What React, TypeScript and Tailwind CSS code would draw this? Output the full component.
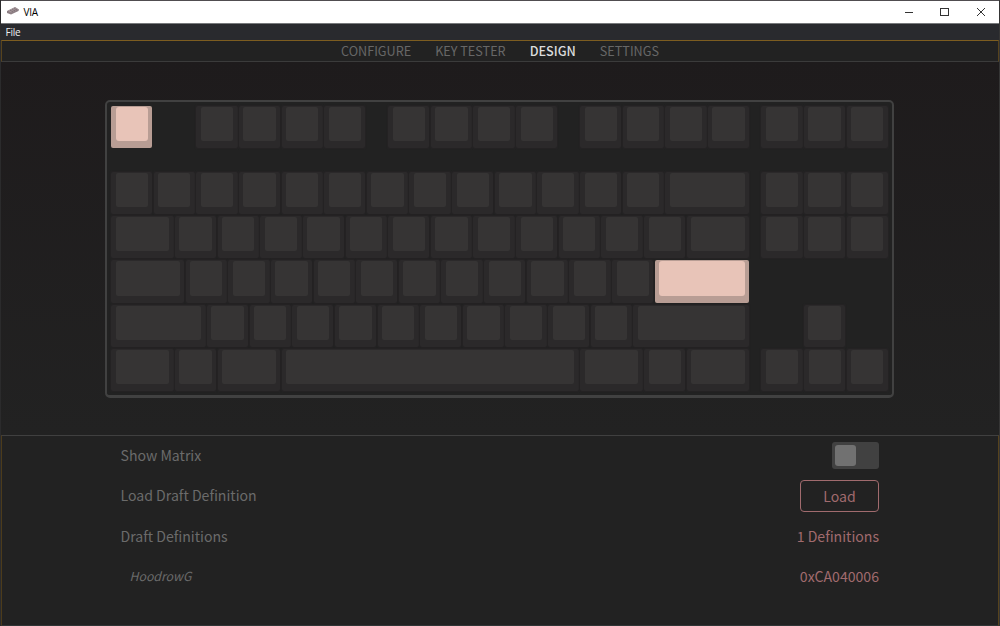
import React from "react";

type Cell = { w: number; gap?: boolean; accent?: boolean };

const UNIT = 42.65;

const k = (w = 1): Cell => ({ w });
const gap = (w: number): Cell => ({ w, gap: true });
const accent = (w = 1): Cell => ({ w, accent: true });
const run = (n: number): Cell[] => Array.from({ length: n }, () => k());

const rows: Cell[][] = [
  [accent(), gap(1), ...run(4), gap(0.5), ...run(4), gap(0.5), ...run(4), gap(0.25), ...run(3)],
  [...run(13), k(2), gap(0.25), ...run(3)],
  [k(1.5), ...run(12), k(1.5), gap(0.25), ...run(3)],
  [k(1.75), ...run(11), accent(2.25)],
  [k(2.25), ...run(10), k(2.75), gap(1.25), k()],
  [k(1.5), k(), k(1.5), k(7), k(1.5), k(), k(1.5), gap(0.25), ...run(3)],
];

function Key({ cell }: { cell: Cell }) {
  const width = { width: cell.w * UNIT };
  if (cell.gap) return <div className="shrink-0" style={width} />;
  return (
    <div className="h-full shrink-0 pr-[1.4px] pb-[2px]" style={width}>
      <div
        className={
          cell.accent
            ? "h-full rounded-[2px] bg-[#b89d94] px-[4.5px] pt-[1px] pb-[7px]"
            : "h-full rounded-[2px] bg-[#2b292a] px-[4.5px] pt-[1px] pb-[7px] shadow-[0_0_1px_1px_#252324]"
        }
      >
        <div className={cell.accent ? "h-full rounded-[3px] bg-[#e8c4b8]" : "h-full rounded-[2px] bg-[#363434]"} />
      </div>
    </div>
  );
}

function TitleBar() {
  return (
    <header className="flex h-[24px] shrink-0 items-center border-t border-b border-t-[#504d50] border-b-[#77797b] bg-white font-['Open_Sans',sans-serif]">
      <svg className="mb-[2px] ml-[6px]" width="12" height="8" viewBox="0 0 12 8">
        <path d="M0 4 L8 0 L12 2.5 L11.5 4 L4 7.5 L0 6 Z" fill="#8d7f84" />
        <path d="M1 3.7 L8 .5 L11 2.3 L4 5.6 Z" fill="#aa9b9e" />
        <path d="M3 3.4l3 1.2M5 2.5l3 1.2M7 1.6l3 1.2" stroke="#75686e" strokeWidth=".8" />
      </svg>
      <span className="ml-[4.5px] text-[10px] leading-none tracking-[-0.2px] text-black">VIA</span>
      <svg className="mr-[13px] ml-auto" width="82" height="10" viewBox="0 0 82 10" fill="none" stroke="#333">
        <path d="M1 5.5h8" />
        <rect x="36.5" y="1.5" width="8" height="7" />
        <path d="M73 1l8 8M81 1l-8 8" />
      </svg>
    </header>
  );
}

const tabs = ["CONFIGURE", "KEY TESTER", "DESIGN", "SETTINGS"];

function Row({ label, children }: { label: React.ReactNode; children: React.ReactNode }) {
  return (
    <div className="flex h-[40.3px] items-center justify-between">
      {label}
      {children}
    </div>
  );
}

export default function App() {
  return (
    <div className="flex h-[626px] w-[1000px] flex-col overflow-hidden border-r border-l border-r-[#353535] border-l-[#2b2b2c] bg-[#222] font-['Noto_Sans_CJK_SC',sans-serif]">
      <TitleBar />
      <div className="flex h-[16px] shrink-0 items-center bg-[#292a2e] pl-[4.5px] font-['Open_Sans',sans-serif] text-[10px] leading-none tracking-[-0.2px] text-[#eee]">
        File
      </div>
      <nav className="flex h-[22px] shrink-0 items-center justify-center gap-[24px] border border-t-[#7d5d20] border-r-[#57431d] border-b-[#3b3b3b] border-l-[#57431d] bg-[#222] text-[12.65px] leading-none text-[#676767]">
        {tabs.map((tab) => (
          <span key={tab} className={tab === "DESIGN" ? "font-medium text-[#dcdcdc]" : ""}>
            {tab}
          </span>
        ))}
      </nav>
      <main className="flex h-[373px] shrink-0 justify-center bg-linear-to-b from-[#1e1b1c] to-[#222]">
        <div className="mt-[38px] mr-px h-[298px] w-[789px] rounded-[5px] border-2 border-b-[3px] border-[#414141] bg-[#222] pt-[3.8px] pl-[4px]">
          {rows.map((row, i) => (
            <div key={i} className={i === 0 ? "mb-[22.1px] flex h-[44.2px]" : "flex h-[44.2px]"}>
              {row.map((cell, j) => (
                <Key key={j} cell={cell} />
              ))}
            </div>
          ))}
        </div>
      </main>
      <section className="flex-1 border border-t-[#404040] border-r-[#57431d] border-b-[#303536] border-l-[#4c3b1b] bg-[#222] pr-[119px] pl-[118.5px] text-[14.1px] leading-none text-[#6b6b6b]">
        <Row label={<span className="pb-[2px]">Show Matrix</span>}>
          <div className="mb-px h-[27px] w-[47px] rounded-[3px] bg-[#414141] p-[3px]">
            <div className="h-[21px] w-[21px] rounded-[3px] bg-[#717171]" />
          </div>
        </Row>
        <Row label={<span className="pb-[2px]">Load Draft Definition</span>}>
          <button className="h-[32px] w-[79px] rounded-[4px] border border-[#a16b6e] text-[#a16b6e]">Load</button>
        </Row>
        <Row label={<span className="pb-[1px]">Draft Definitions</span>}>
          <span className="pb-[1px] text-[#a16b6e]">1 Definitions</span>
        </Row>
        <Row label={<span className="pb-[1px] pl-[9px] text-[12.3px] italic">HoodrowG</span>}>
          <span className="pb-[2px] text-[#a16b6e]">0xCA040006</span>
        </Row>
      </section>
    </div>
  );
}
